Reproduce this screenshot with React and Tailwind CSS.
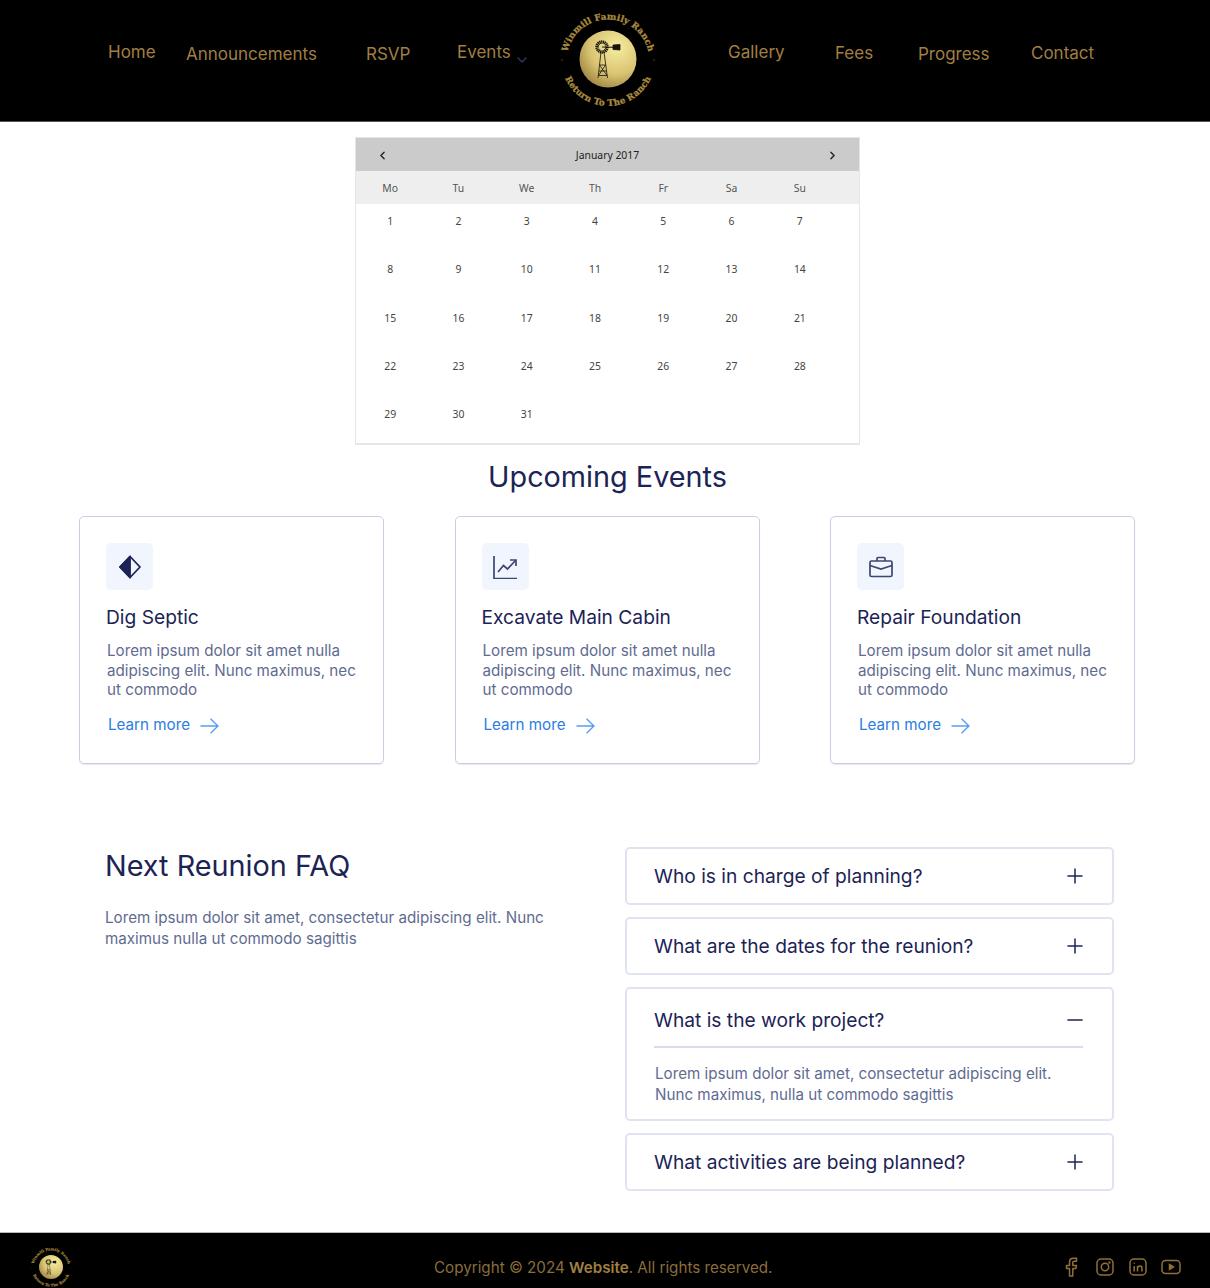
import React from 'react';
import { ChevronDown, ChevronLeft, ChevronRight, Plus, Minus } from 'lucide-react';

const navLeft = [
  { label: 'Home', cls: 'ml-[108px] mt-[41px] w-[48px]' },
  { label: 'Announcements', cls: 'ml-[30px] mt-[43px] w-[132px]' },
  { label: 'RSVP', cls: 'ml-[48px] mt-[43px] w-[45px]' },
  { label: 'Events', cls: 'ml-[46px] mt-[41px] w-[54px]' },
];

const navRight = [
  { label: 'Gallery', cls: 'ml-[70px] mt-[41px] w-[57px]' },
  { label: 'Fees', cls: 'ml-[50px] mt-[42px] w-[39px]' },
  { label: 'Progress', cls: 'ml-[44px] mt-[43px] w-[72px]' },
  { label: 'Contact', cls: 'ml-[41px] mt-[42px] w-[63px]' },
];

const weekdays = ['Mo', 'Tu', 'We', 'Th', 'Fr', 'Sa', 'Su'];
const days = Array.from({ length: 31 }, (_, i) => i + 1);

const faqs = [
  { q: 'Who is in charge of planning?' },
  { q: 'What are the dates for the reunion?' },
  {
    q: 'What is the work project?',
    a: 'Lorem ipsum dolor sit amet, consectetur adipiscing elit. Nunc maximus, nulla ut commodo sagittis',
  },
  { q: 'What activities are being planned?' },
];

function Logo({ className, id }) {
  return (
    <svg viewBox="0 0 100 100" className={className}>
      <defs>
        <radialGradient id={`gold-${id}`} cx="0.65" cy="0.3" r="0.85">
          <stop offset="0" stopColor="#f7ed9f" />
          <stop offset="0.55" stopColor="#d9c473" />
          <stop offset="1" stopColor="#8f7533" />
        </radialGradient>
        <path id={`top-${id}`} d="M 8.5 52 A 41.5 41.5 0 0 1 91.5 52" />
        <path id={`bottom-${id}`} d="M 3 50 A 47 47 0 0 0 97 50" />
      </defs>
      <circle cx="50" cy="50" r="28.5" fill={`url(#gold-${id})`} />
      <g stroke="#17140a" fill="none" strokeWidth="0.8">
        <circle cx="44" cy="38" r="5" strokeWidth="3.4" strokeDasharray="1.2 0.5" />
        <path d="M44 38 L 62 38.5" strokeWidth="1.2" />
        <path d="M55 36 L 62 35.5 L 62 41 L 55 40.5 Z" fill="#17140a" />
        <path d="M43 43 L 40 69 M 46 43 L 49.5 69 M 41.5 56 H 47.5 M 41 62 H 48.5 M 40.5 66.5 H 49 M 41.5 56 L 49 66.5 M 47.5 56 L 40.5 66.5" />
      </g>
      <text fontFamily="'DejaVu Serif', serif" fontWeight="700" fontSize="8.8" fill="#a98a3e" stroke="#a98a3e" strokeWidth="0.3" letterSpacing="0.15">
        <textPath href={`#top-${id}`} startOffset="50%" textAnchor="middle">
          Winmill Family Ranch
        </textPath>
      </text>
      <text fontFamily="'DejaVu Serif', serif" fontWeight="700" fontSize="8.8" fill="#a98a3e" stroke="#a98a3e" strokeWidth="0.3" letterSpacing="0.15">
        <textPath href={`#bottom-${id}`} startOffset="50%" textAnchor="middle">
          Return To The Ranch
        </textPath>
      </text>
      <circle cx="4" cy="51" r="0.6" fill="#a98a3e" />
      <circle cx="96" cy="51" r="0.6" fill="#a98a3e" />
    </svg>
  );
}

function HalfDiamond() {
  return (
    <svg width="24" height="24" viewBox="0 0 24 24">
      <path d="M12 1.5 L22 12 L12 22.5 L2 12 Z" fill="none" stroke="#1c2355" strokeWidth="1.8" strokeLinejoin="round" />
      <path d="M12 1.5 L2 12 L12 22.5 Z" fill="#1c2355" stroke="#1c2355" strokeWidth="1.8" strokeLinejoin="round" />
    </svg>
  );
}

function ChartIcon() {
  return (
    <svg width="24" height="24" viewBox="0 0 24 24" fill="none" stroke="#3f4672" strokeWidth="1.7">
      <path d="M1 1 V23.5 H24" />
      <path d="M5 17 L10.5 10.5 L14.5 14 L22.5 5.5" />
      <path d="M17 5 H23 V11" />
    </svg>
  );
}

function CaseIcon() {
  return (
    <svg width="24" height="22" viewBox="0 0 24 22" fill="none" stroke="#3f4672" strokeWidth="1.7">
      <rect x="1" y="5" width="22" height="15.5" rx="1.5" />
      <path d="M8 5 V2.5 Q8 1.5 9 1.5 H15 Q16 1.5 16 2.5 V5" />
      <path d="M1 9.5 L12 13 L23 9.5" />
    </svg>
  );
}

function ArrowIcon() {
  return (
    <svg width="19" height="16" viewBox="0 0 19 16" fill="none" stroke="#5a9ff0" strokeWidth="1.4">
      <path d="M0.5 8 H18 M10.5 0.8 L18 8 L10.5 15.2" />
    </svg>
  );
}

function Calendar() {
  return (
    <div className="ml-[355px] mt-[15px] h-[308px] w-[505px] border border-b-2 border-[#e6e6e6] font-['Noto_Sans',sans-serif] text-[10.4px] text-[#444]">
      <div className="flex h-[33px] items-center justify-between bg-[#cbcbcb] px-[20px] pt-[2px] text-[#222]">
        <ChevronLeft size={13} strokeWidth={2.5} />
        <span>January 2017</span>
        <ChevronRight size={13} strokeWidth={2.5} />
      </div>
      <div className="grid h-[33px] grid-cols-7 items-center bg-[#eeeeee] pr-[25px] pt-[2px] text-center text-[#555]">
        {weekdays.map((d) => (
          <span key={d}>{d}</span>
        ))}
      </div>
      <div className="grid auto-rows-[48.25px] grid-cols-7 pr-[25px] pt-[10px] text-center">
        {days.map((d) => (
          <span key={d}>{d}</span>
        ))}
      </div>
    </div>
  );
}

function EventCard({ title, icon }) {
  return (
    <div className="h-[248px] w-[305px] rounded-[5px] border border-[#c9cde6] pl-[26px] pr-[20px] pt-[26px] shadow-[0_1px_1px_#e4e6f2]">
      <div className="flex h-[47px] w-[47px] items-center justify-center rounded-[5px] bg-[#f1f5fd]">{icon}</div>
      <h3 className="mt-[14px] text-[19.2px] leading-[26px] text-[#1c2355]">{title}</h3>
      <p className="ml-px mt-[11px] text-[15.2px] leading-[19.5px] text-[#5f6b91]">
        Lorem ipsum dolor sit amet nulla adipiscing elit. Nunc maximus, nec ut commodo
      </p>
      <a className="ml-[2px] mt-[15px] flex items-center gap-[10px] text-[15.2px] leading-[20px] text-[#2a7de1]">
        Learn more
        <span className="mt-[3px]">
          <ArrowIcon />
        </span>
      </a>
    </div>
  );
}

function FaqItem({ q, a }) {
  return (
    <div className="w-[489px] rounded-[5px] border-2 border-[#e0e3f1] pl-[27px] pr-[29px]">
      <div className={`flex items-center justify-between ${a ? 'h-[59px] border-b-2 border-[#d9dcec] pt-[5px]' : 'h-[54px]'}`}>
        <span className="text-[19.2px] text-[#1c2355]">{q}</span>
        {a ? (
          <Minus size={24} strokeWidth={1.6} color="#1c2355" className="-mr-[4px]" />
        ) : (
          <Plus size={24} strokeWidth={1.5} color="#1c2355" className="-mr-[4px]" />
        )}
      </div>
      {a && <p className="ml-px mb-[14px] mt-[15px] w-[410px] text-[15.2px] leading-[21px] text-[#5f6b91]">{a}</p>}
    </div>
  );
}

export default function App() {
  return (
    <div className="h-[1288px] overflow-hidden bg-white font-['Inter',sans-serif]">
      <header className="flex h-[122px] border-b border-[#555] bg-black text-[17px] leading-[22px] text-[#a07f42]">
        {navLeft.map((n) => (
          <a key={n.label} className={`${n.cls} whitespace-nowrap`}>
            {n.label}
          </a>
        ))}
        <ChevronDown size={16} color="#2f3a66" className="ml-[3px] mt-[52px]" />
        <Logo id="head" className="ml-[28px] mt-[9px] h-[100px] w-[100px] shrink-0" />
        {navRight.map((n) => (
          <a key={n.label} className={`${n.cls} whitespace-nowrap`}>
            {n.label}
          </a>
        ))}
      </header>

      <Calendar />

      <h2 className="mt-[13px] pl-[5px] text-center text-[28.8px] leading-[38px] text-[#1c2355]">Upcoming Events</h2>

      <section className="ml-[79px] mt-[20px] flex gap-[70.5px]">
        <EventCard title="Dig Septic" icon={<HalfDiamond />} />
        <EventCard title="Excavate Main Cabin" icon={<ChartIcon />} />
        <EventCard title="Repair Foundation" icon={<CaseIcon />} />
      </section>

      <section className="ml-[105px] mt-[83px] flex h-[344px]">
        <div className="w-[520px]">
          <h2 className="mt-[2px] text-[28.8px] leading-[34px] text-[#1c2355]">Next Reunion FAQ</h2>
          <p className="mt-[24px] w-[450px] text-[15.2px] leading-[21px] text-[#5f6b91]">
            Lorem ipsum dolor sit amet, consectetur adipiscing elit. Nunc maximus nulla ut commodo sagittis
          </p>
        </div>
        <div className="flex flex-col gap-[12px]">
          {faqs.map((f) => (
            <FaqItem key={f.q} q={f.q} a={f.a} />
          ))}
        </div>
      </section>

      <footer className="mt-[41px] flex h-[56px] items-center border-t border-[#bbb] bg-black text-[15.2px] text-[#8a6d3b]">
        <Logo id="foot" className="ml-[30px] mt-[13px] h-[42px] w-[42px] shrink-0" />
        <p className="ml-[362px] mt-[16px] w-[340px] whitespace-nowrap">
          Copyright © 2024 <b className="font-semibold text-[#a07f42]">Website</b>. All rights reserved.
        </p>
        <div className="ml-[288px] mt-[12px] flex items-center gap-[13px] text-[#8f7038]">
          <svg width="20" height="20" viewBox="0 0 20 20" fill="none" stroke="currentColor" strokeWidth="1.5" strokeLinejoin="round">
            <path d="M7.5 19 V11.5 H4.5 V8.5 H7.5 V5 Q7.5 1.2 11.5 1.2 H14.5 V4.2 H12 Q10.8 4.2 10.8 5.5 V8.5 H14.5 L13.8 11.5 H10.8 V19 Z" />
          </svg>
          <svg width="20" height="20" viewBox="0 0 20 20" fill="none" stroke="currentColor" strokeWidth="1.5">
            <rect x="2" y="2" width="16" height="16" rx="4" />
            <circle cx="10" cy="10" r="3.7" />
            <circle cx="14.4" cy="5.6" r="0.5" />
          </svg>
          <svg width="20" height="20" viewBox="0 0 20 20" fill="none" stroke="currentColor" strokeWidth="1.5">
            <rect x="2" y="2" width="16" height="16" rx="4" />
            <path d="M6.2 9 V14.5 M6.2 5.8 V6.8 M9.5 14.5 V9 M9.5 11.5 Q9.5 9 11.8 9 Q14 9 14 11.5 V14.5" />
          </svg>
          <svg width="20" height="16" viewBox="0 0 20 16" fill="none" stroke="currentColor" strokeWidth="1.5">
            <rect x="1" y="1.5" width="18" height="13" rx="3.5" />
            <path d="M8.5 5.5 L12.5 8 L8.5 10.5 Z" fill="currentColor" />
          </svg>
        </div>
      </footer>
    </div>
  );
}
